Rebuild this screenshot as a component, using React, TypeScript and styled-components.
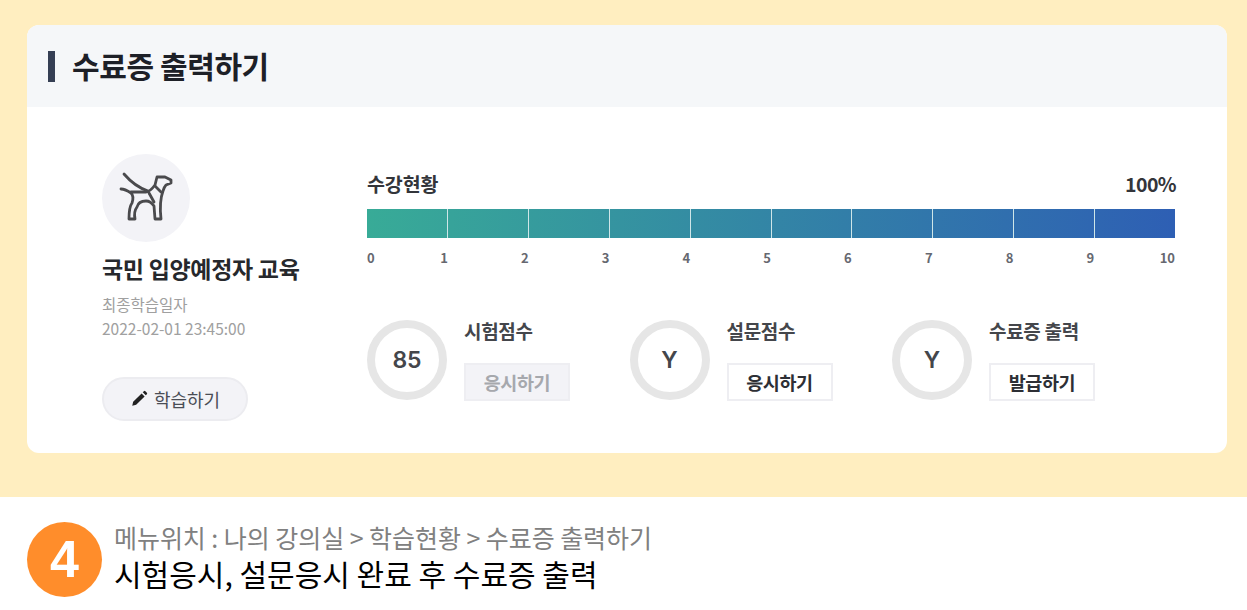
import React from "react";
import styled, { createGlobalStyle } from "styled-components";

const Global = createGlobalStyle`
  * { box-sizing: border-box; }
  html, body { margin: 0; padding: 0; background: #fff; }
  body { font-family: "Noto Sans CJK KR", "Noto Sans", sans-serif; overflow: hidden; }
`;

const Page = styled.div`
  width: 1247px;
  height: 610px;
  display: flex;
  flex-direction: column;
`;
const Hero = styled.section`
  height: 497px;
  background: #ffeec0;
  padding: 25px 20px 44px 27px;
`;
const Card = styled.div`
  height: 428px;
  background: #fff;
  border-radius: 12px;
  overflow: hidden;
`;
const CardHeader = styled.header`
  height: 82px;
  background: #f5f7f9;
  display: flex;
  align-items: center;
  padding-left: 21px;
  gap: 17px;
`;
const HeaderMark = styled.span`
  width: 7px;
  height: 31px;
  background: #353f54;
`;
const HeaderTitle = styled.h1`
  margin: 0 0 2px;
  font-size: 30px;
  font-weight: 700;
  letter-spacing: -0.4px;
  color: #1d2027;
  line-height: 1;
`;
const CardBody = styled.div`
  display: flex;
  padding: 47px 52px 0 75px;
`;
const Course = styled.div`
  width: 265px;
  flex: none;
  display: flex;
  flex-direction: column;
  align-items: flex-start;
`;
const Avatar = styled.div`
  width: 88px;
  height: 88px;
  border-radius: 50%;
  background: #f3f3f7;
  display: flex;
  align-items: center;
  justify-content: center;
`;
const CourseTitle = styled.h2`
  margin: 11px 0 0;
  font-size: 23px;
  line-height: 30px;
  font-weight: 700;
  letter-spacing: -0.3px;
  color: #26282c;
  height: 27px;
  white-space: nowrap;
`;
const Meta = styled.div`
  margin-top: 12px;
  font-size: 15.5px;
  line-height: 24px;
  color: #a0a0a0;
`;
const StudyButton = styled.button`
  margin-top: 37px;
  width: 146px;
  height: 44px;
  border: 2px solid #ececf0;
  border-radius: 22px;
  background: #f3f3f7;
  display: flex;
  align-items: center;
  justify-content: center;
  gap: 6px;
  font-family: inherit;
  font-size: 18px;
  letter-spacing: -0.1px;
  color: #4a4d55;
  padding: 0;
`;
const Status = styled.div`
  width: 808px;
  flex: none;
  padding-top: 15px;
`;
const ProgressHead = styled.div`
  display: flex;
  justify-content: space-between;
  align-items: center;
  height: 28px;
  font-size: 19.5px;
  font-weight: 700;
  letter-spacing: -0.1px;
  color: #33353a;
  margin-right: -1px;
`;
const Percent = styled.span`
  letter-spacing: -0.6px;
`;
const Track = styled.div`
  margin-top: 12px;
  height: 29px;
  display: flex;
  background: linear-gradient(90deg, #38ab97 0%, #2e5fb4 100%);
`;
const Segment = styled.span`
  flex: 1;
  border-right: 1.5px solid #cfe6e8;
  &:last-child { border-right: none; }
`;
const Ticks = styled.div`
  display: flex;
  margin: 11px 0 0;
  height: 18px;
  line-height: 18px;
  font-size: 13px;
  font-weight: 700;
  color: #666870;
`;
const Tick = styled.span`
  flex: 1;
  text-align: right;
  &:first-child {
    flex: none;
    width: 0;
    text-align: left;
    padding-left: 0;
  }
`;
const Scores = styled.div`
  margin-top: 53px;
  display: flex;
`;
const Score = styled.div`
  width: 262.5px;
  display: flex;
  gap: 17px;
`;
const Ring = styled.div`
  width: 80px;
  height: 80px;
  border-radius: 50%;
  border: 8px solid #e6e6e6;
  display: flex;
  align-items: center;
  justify-content: center;
  font-family: Inter, "Noto Sans", sans-serif;
  font-size: 23px;
  font-weight: 600;
  color: #44464b;
`;
const ScoreBody = styled.div`
  display: flex;
  flex-direction: column;
  align-items: flex-start;
`;
const ScoreLabel = styled.div`
  height: 21px;
  line-height: 21px;
  font-size: 19px;
  font-weight: 700;
  letter-spacing: -0.3px;
  color: #44464b;
`;
const ActionButton = styled.button<{ $disabled?: boolean }>`
  margin-top: 22px;
  width: 106px;
  height: 38px;
  border: 2px solid #eeeef2;
  background: ${(p) => (p.$disabled ? "#f3f3f7" : "#fff")};
  color: ${(p) => (p.$disabled ? "#a6a8ad" : "#2d2f35")};
  font-family: inherit;
  font-size: 18.5px;
  font-weight: 700;
  letter-spacing: -0.4px;
  padding: 0;
`;
const Footer = styled.footer`
  flex: 1;
  background: #fff;
  display: flex;
  align-items: flex-start;
  padding: 25px 0 0 27px;
  gap: 12px;
`;
const StepBadge = styled.div`
  width: 75px;
  height: 75px;
  border-radius: 50%;
  background: #ff8d2b;
  color: #fff;
  display: flex;
  align-items: center;
  justify-content: center;
  padding-bottom: 2px;
  font-family: "Liberation Sans", sans-serif;
  font-size: 52px;
  font-weight: 700;
`;
const FooterText = styled.div`
  display: flex;
  flex-direction: column;
`;
const MenuPath = styled.div`
  height: 30px;
  line-height: 30px;
  font-size: 25px;
  letter-spacing: -0.05px;
  color: #808080;
`;
const Instruction = styled.div`
  height: 42px;
  line-height: 42px;
  font-size: 30px;
  font-weight: 400;
  color: #000;
`;

const DogIcon = () => (
  <svg width="56" height="52" viewBox="118 173 56 52" fill="none" stroke="#4a4a4d" strokeWidth="2.8" strokeLinejoin="round" strokeLinecap="round">
    <path d="M124 175 C130 182 139 189 148 192" />
    <path d="M121 190 C125 190 128 192 131 194 C134 197 133 201 132 204 C129 208 129 214 129 220 L135 220 C134 215 134 212 137 208 C138 204 141 202 146 202 C149 202 152 204 154 207 L155 220 L161 220 C160 211 160 200 163 192 C164 189 165 187 166 186 L171 184 L171 181 L165 178 L157 178 L155 186 C152 190 149 193 146 193 L131 193" />
    <path d="M149 194 L154 203 M155 187 L161 193" />
  </svg>
);

const PencilIcon = () => (
  <svg width="18" height="18" viewBox="0 0 24 24" fill="#222">
    <path d="M3 21l1.2-5.2L15.5 4.5l4 4L8.2 19.8 3 21z M17 3l1.5-1.5a1.4 1.4 0 0 1 2 0l2 2a1.4 1.4 0 0 1 0 2L21 7z" />
  </svg>
);

const ticks = [0, 1, 2, 3, 4, 5, 6, 7, 8, 9, 10];
const segments = ticks.slice(1);
const scores = [
  { value: "85", label: "시험점수", action: "응시하기", disabled: true },
  { value: "Y", label: "설문점수", action: "응시하기", disabled: false },
  { value: "Y", label: "수료증 출력", action: "발급하기", disabled: false },
];

export default function App() {
  return (
    <Page>
      <Global />
      <Hero>
        <Card>
          <CardHeader>
            <HeaderMark />
            <HeaderTitle>수료증 출력하기</HeaderTitle>
          </CardHeader>
          <CardBody>
            <Course>
              <Avatar>
                <DogIcon />
              </Avatar>
              <CourseTitle>국민 입양예정자 교육</CourseTitle>
              <Meta>
                최종학습일자
                <br />
                2022-02-01 23:45:00
              </Meta>
              <StudyButton>
                <PencilIcon />
                학습하기
              </StudyButton>
            </Course>
            <Status>
              <ProgressHead>
                <span>수강현황</span>
                <Percent>100%</Percent>
              </ProgressHead>
              <Track>
                {segments.map((n) => (
                  <Segment key={n} />
                ))}
              </Track>
              <Ticks>
                {ticks.map((n) => (
                  <Tick key={n}>{n}</Tick>
                ))}
              </Ticks>
              <Scores>
                {scores.map((s) => (
                  <Score key={s.label}>
                    <Ring>{s.value}</Ring>
                    <ScoreBody>
                      <ScoreLabel>{s.label}</ScoreLabel>
                      <ActionButton $disabled={s.disabled}>{s.action}</ActionButton>
                    </ScoreBody>
                  </Score>
                ))}
              </Scores>
            </Status>
          </CardBody>
        </Card>
      </Hero>
      <Footer>
        <StepBadge>4</StepBadge>
        <FooterText>
          <MenuPath>메뉴위치 : 나의 강의실 &gt; 학습현황 &gt; 수료증 출력하기</MenuPath>
          <Instruction>시험응시, 설문응시 완료 후 수료증 출력</Instruction>
        </FooterText>
      </Footer>
    </Page>
  );
}
